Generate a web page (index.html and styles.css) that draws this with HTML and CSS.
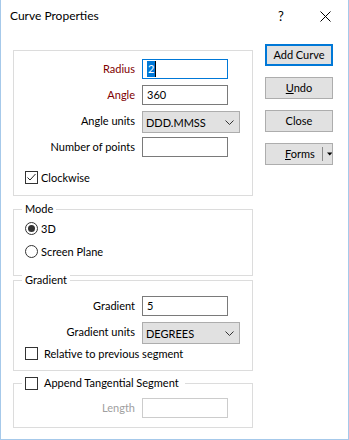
FILE: index.html
```html
<!DOCTYPE html>
<html>
<head>
<meta charset="utf-8">
<link rel="stylesheet" href="styles.css">
</head>
<body>
<div class="window">
  <div class="titlebar">
    <span class="title">Curve Properties</span>
    <span class="tb-btn help">?</span>
    <span class="tb-btn close">
      <svg width="11" height="11" viewBox="0 0 11 11"><path d="M0.5 0.5 L10.5 10.5 M10.5 0.5 L0.5 10.5" stroke="#000" stroke-width="1" fill="none"/></svg>
    </span>
  </div>
  <div class="content">
    <div class="left">
      <div class="group g-main">
        <div class="form-grid">
          <span class="lbl req">Radius</span>
          <div class="input focus"><span class="selected">2</span><span class="caret"></span></div>
          <span class="lbl req">Angle</span>
          <div class="input">360</div>
          <span class="lbl">Angle units</span>
          <div class="select"><span>DDD.MMSS</span><svg class="chev" width="9" height="5" viewBox="0 0 9 5"><path d="M0.5 0.5 L4.5 4.5 L8.5 0.5" stroke="#333" stroke-width="1" fill="none"/></svg></div>
          <span class="lbl">Number of points</span>
          <div class="input"></div>
        </div>
        <div class="check-row tight">
          <span class="cb"><svg width="11" height="11" viewBox="0 0 11 11"><path d="M1.5 5.5 L4 8 L9.5 2" stroke="#222" stroke-width="1" fill="none"/></svg></span>
          <span>Clockwise</span>
        </div>
      </div>

      <div class="group g-mode">
        <span class="legend">Mode</span>
        <div class="radio-row"><span class="radio checked"><span class="dot"></span></span><span>3D</span></div>
        <div class="radio-row second"><span class="radio"></span><span>Screen Plane</span></div>
      </div>

      <div class="group g-grad">
        <span class="legend">Gradient</span>
        <div class="form-grid">
          <span class="lbl">Gradient</span>
          <div class="input">5</div>
          <span class="lbl">Gradient units</span>
          <div class="select"><span>DEGREES</span><svg class="chev" width="9" height="5" viewBox="0 0 9 5"><path d="M0.5 0.5 L4.5 4.5 L8.5 0.5" stroke="#333" stroke-width="1" fill="none"/></svg></div>
        </div>
        <div class="check-row grad-check">
          <span class="cb"></span>
          <span>Relative to previous segment</span>
        </div>
      </div>

      <div class="group g-append">
        <span class="legend legend-check"><span class="cb"></span><span>Append Tangential Segment</span></span>
        <div class="form-grid">
          <span class="lbl disabled">Length</span>
          <div class="input input-disabled"></div>
        </div>
      </div>
    </div>

    <div class="buttons">
      <div class="btn default">Add Curve</div>
      <div class="btn"><span><u>U</u>ndo</span></div>
      <div class="btn">Close</div>
      <div class="btn split"><span><u>F</u>orms</span><span class="sep"></span><svg width="7" height="4" viewBox="0 0 7 4"><path d="M0 0 L7 0 L3.5 4 Z" fill="#000"/></svg></div>
    </div>
  </div>
</div>
</body>
</html>
```

FILE: styles.css
```css
* { box-sizing: border-box; }
body {
  margin: 0;
  font-family: "Lato", "Noto Sans", sans-serif;
  font-size: 11px;
  color: #000;
  background: #fff;
}
.window {
  width: 349px;
  height: 440px;
  border: 1px solid #a6c9ea;
  border-top: none;
  background: #fff;
}
.titlebar {
  height: 32px;
  display: flex;
  align-items: center;
  padding-left: 9px;
}
.title { flex: 1; line-height: 16px; font-size: 12px; }
.tb-btn {
  width: 46px;
  height: 32px;
  display: flex;
  align-items: center;
  justify-content: center;
}
.help { font-size: 13px; padding-left: 4px; }
.content {
  display: flex;
  padding-left: 12px;
}
.left {
  width: 240px;
  display: flex;
  flex-direction: column;
}
.group {
  border: 1px solid #dcdcdc;
  position: relative;
}
.g-main { margin-top: 18px; padding: 8px 0 10px; }
.g-mode { margin-top: 13px; padding: 10px 0 16px 11px; }
.g-grad { margin-top: 4px; padding: 15px 0 9px; }
.g-append { margin-top: 12px; padding: 14px 0 9px; }

.legend {
  position: absolute;
  top: -9px;
  left: 8px;
  padding: 0 3px;
  background: #fff;
  line-height: 16px;
}
.legend-check {
  display: flex;
  align-items: center;
  gap: 6px;
  padding-right: 6px;
}

.form-grid {
  display: grid;
  grid-template-columns: 121px 1fr;
  column-gap: 7px;
  grid-auto-rows: 20px;
  row-gap: 6px;
  align-items: start;
}
.lbl {
  text-align: right;
  line-height: 20px;
  white-space: nowrap;
}
.req { color: #800000; }
.disabled { color: #a0a0a0; }

.input {
  width: 86px;
  height: 20px;
  border: 1px solid #7a7a7a;
  padding-left: 4px;
  display: flex;
  align-items: center;
  line-height: 16px;
  background: #fff;
}
.input.focus { border-color: #0078d7; }
.input-disabled { border-color: #cccccc; }
.selected {
  background: #0078d7;
  color: #fff;
  padding: 0 1px;
  line-height: 16px;
}
.caret {
  width: 1px;
  height: 16px;
  background: #000;
}
.select {
  width: 98px;
  height: 22px;
  background: #e1e1e1;
  border: 1px solid #adadad;
  padding: 0 5px 0 3px;
  display: flex;
  align-items: center;
  justify-content: space-between;
}

.check-row {
  display: flex;
  align-items: center;
  gap: 6px;
  height: 16px;
  margin-left: 11px;
}
.check-row.tight { gap: 3px; margin-top: 12px; }
.grad-check { margin-top: 3px; }
.cb {
  width: 13px;
  height: 13px;
  border: 1px solid #333;
  background: #fff;
  display: inline-flex;
  flex: none;
}

.radio-row {
  display: flex;
  align-items: center;
  gap: 3px;
  height: 16px;
}
.radio-row.second { margin-top: 7px; }
.radio {
  width: 13px;
  height: 13px;
  border: 1px solid #333;
  border-radius: 50%;
  display: inline-flex;
  align-items: center;
  justify-content: center;
  flex: none;
}
.dot {
  width: 7px;
  height: 7px;
  border-radius: 50%;
  background: #333;
}

.buttons {
  margin-left: 12px;
  padding-top: 12px;
  display: flex;
  flex-direction: column;
  gap: 11px;
}
.btn {
  width: 68px;
  height: 22px;
  background: #e1e1e1;
  border: 1px solid #adadad;
  display: flex;
  align-items: center;
  justify-content: center;
  line-height: 16px;
}
.btn.default { border: 2px solid #0078d7; }
.btn.split {
  justify-content: flex-start;
  padding-left: 19px;
}
.sep {
  width: 1px;
  height: 14px;
  background: #8a8a8a;
  margin: 0 4px 0 7px;
}
```
